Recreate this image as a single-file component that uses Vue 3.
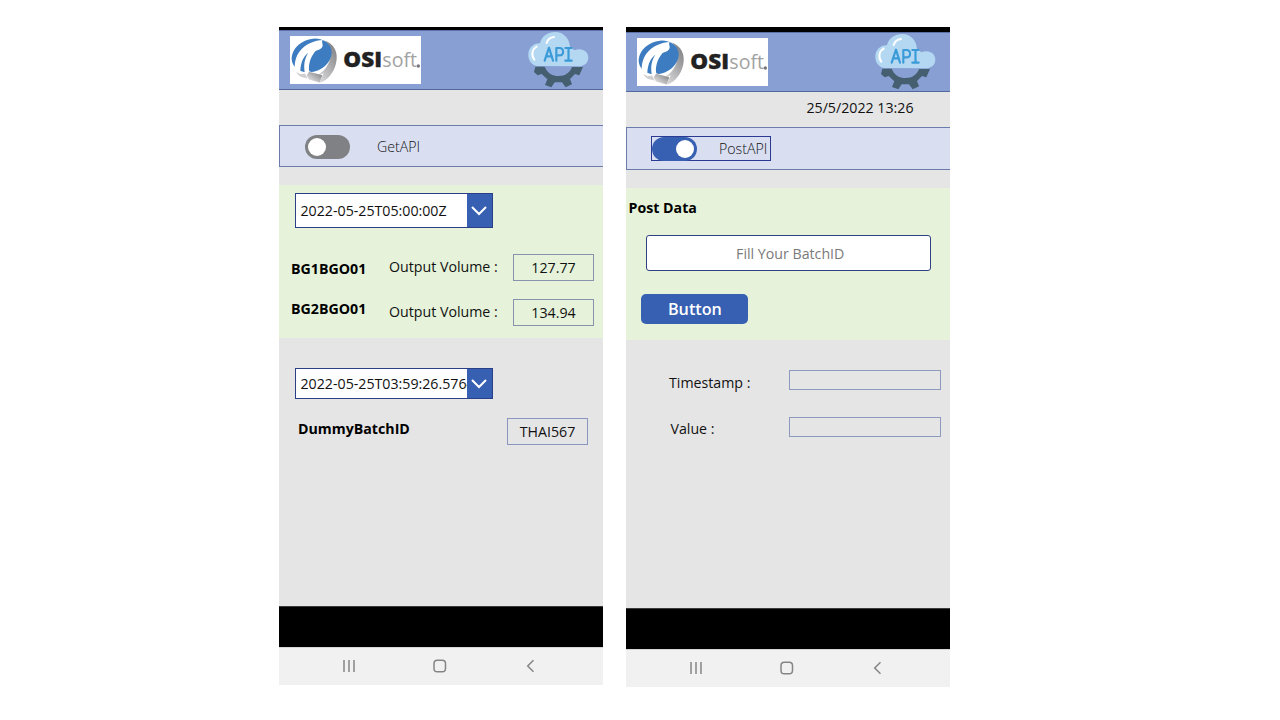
<script setup>
const phones = [
  { id: 'get', toggle: 'GetAPI', on: false, clock: '' },
  { id: 'post', toggle: 'PostAPI', on: true, clock: '25/5/2022 13:26' },
]
const volumes = [
  { tag: 'BG1BGO01', value: '127.77' },
  { tag: 'BG2BGO01', value: '134.94' },
]
const results = ['Timestamp :', 'Value :']
</script>

<template>
  <main class="stage">
    <section v-for="p in phones" :key="p.id" class="phone" :class="p.id">
      <header class="header">
        <svg class="logo" viewBox="45 45 393 147" preserveAspectRatio="none">
          <defs>
            <linearGradient id="silver" x1="0" y1="1" x2="1" y2="0">
              <stop offset="0" stop-color="#f2f2f2" />
              <stop offset=".45" stop-color="#bcbcbe" />
              <stop offset="1" stop-color="#77777b" />
            </linearGradient>
          </defs>
          <rect x="45" y="45" width="393" height="147" fill="#fff" />
          <path d="M146 58C179 68 191 97 183 128C177 155 158 179 135 186L101 176L106 158L132 160C149 153 165 126 168 101C169 80 159 66 146 58Z" fill="url(#silver)" />
          <ellipse cx="110" cy="104" rx="62" ry="49" transform="rotate(-24 110 104)" fill="#3d7cc0" />
          <path d="M50 132C55 158 74 158 89 156L103 152L134 163L146 158L134 186L101 176L84 170C66 170 50 156 50 132Z" fill="#fff" />
          <path d="M48 124C49 140 53 150 62 156C62 128 72 104 90 88C67 99 57 122 62 156L76 161C75 131 83 109 100 96C88 114 85 136 90 159L103 153C99 134 105 110 121 91C133 87 142 83 143 74C143 66 139 61 143 57C121 58 91 68 73 93C62 108 57 130 60 150C53 143 50 135 48 124Z" fill="#fff" />
          <path d="M64 153L76 161L90 159L98 174L82 170C73 168 68 161 64 153Z" fill="#cfcfd1" />
          <path d="M102 153L142 164L134 186L102 177L95 164Z" fill="url(#silver)" />
          <text class="osi" x="205" y="140" textLength="116" lengthAdjust="spacingAndGlyphs">OSI</text>
          <text class="soft" x="322" y="139" textLength="104" lengthAdjust="spacingAndGlyphs">soft</text>
          <circle cx="430" cy="136" r="5" fill="#777" />
        </svg>
        <svg class="api" viewBox="36 33 186 174">
          <path d="M61 140L57 156L68 166L80 162L97 178L90 195L109 202L119 187H141L152 202L171 193L165 177L180 162L193 166L204 141H171C165 158 151 168 131 168C111 168 96 158 89 140Z" fill="#455f70" />
          <path d="M69 138C51 136 40 122 40 104C40 84 55 69 75 70C80 48 98 36 121 36C145 36 163 55 165 80C172 84 176 89 178 91C200 81 220 94 220 112C220 130 207 138 194 139Z" fill="#b5d8f2" />
          <path d="M58 119C48 107 51 87 65 80M95 69C98 59 107 52 117 51" fill="none" stroke="#fff" stroke-width="6" stroke-linecap="round" />
          <g fill="none" stroke="#3a9bd8" stroke-width="6.5" stroke-linecap="round" stroke-linejoin="round">
            <path d="M89 122L102 83L114 122M93 109H111" />
            <path d="M124 122V84H133C148 84 148 106 133 106H125" />
            <path d="M151 84H170M160.5 84V122M151 122H170" />
          </g>
        </svg>
      </header>
      <div class="clock">{{ p.clock }}</div>
      <div class="bar">
        <div class="toggle" :class="{ on: p.on }">
          <span class="track"><span class="knob"></span></span>
          <span class="toggle-label">{{ p.toggle }}</span>
        </div>
      </div>

      <template v-if="p.id === 'get'">
        <div class="green">
          <div class="select">
            <span class="select-text">2022-05-25T05:00:00Z</span>
            <span class="arrow"><svg viewBox="0 0 25 33"><path d="M5 13L12 20L19 13" /></svg></span>
          </div>
          <div v-for="v in volumes" :key="v.tag" class="volume">
            <b>{{ v.tag }}</b>
            <span class="volume-label">Output Volume :</span>
            <span class="box">{{ v.value }}</span>
          </div>
        </div>
        <div class="lower">
          <div class="select short">
            <span class="select-text">2022-05-25T03:59:26.5764</span>
            <span class="arrow"><svg viewBox="0 0 25 29"><path d="M5 11L12 18L19 11" /></svg></span>
          </div>
          <div class="batch">
            <b>DummyBatchID</b>
            <span class="box">THAI567</span>
          </div>
        </div>
      </template>

      <template v-else>
        <div class="green">
          <b class="post-title">Post Data</b>
          <div class="input">Fill Your BatchID</div>
          <div class="button">Button</div>
        </div>
        <div class="lower">
          <div v-for="r in results" :key="r" class="result">
            <span>{{ r }}</span>
            <span class="empty"></span>
          </div>
        </div>
      </template>

      <div class="black"></div>
      <nav class="nav">
        <svg viewBox="0 0 324 38">
          <g fill="none" stroke="#858585" stroke-width="1.5">
            <path d="M65 13V25M70 13V25M75 13V25" />
            <rect x="155" y="13.2" width="11.5" height="11.5" rx="3.3" />
            <path d="M254.5 13.2L248.7 19L254.5 24.8" />
          </g>
        </svg>
      </nav>
    </section>
  </main>
</template>

<style>
body { background: #fff; }
</style>

<style scoped>
* { box-sizing: border-box; }
.stage {
  width: 1280px;
  height: 720px;
  display: flex;
  align-items: flex-start;
  gap: 23px;
  padding: 27px 0 0 279px;
  overflow: hidden;
  background: #fff;
  color: #111;
  font-family: "Open Sans", "Noto Sans", sans-serif;
  font-size: 14.2px;
  line-height: 20px;
  white-space: nowrap;
}
.phone {
  width: 324px;
  display: flex;
  flex-direction: column;
  background: #e5e5e5;
  border-top: 3px solid #000;
}
.post { border-top-width: 5px; }
.header {
  height: 60px;
  display: flex;
  justify-content: space-between;
  padding: 4.5px 14px 0 11px;
  background: #879fd3;
  border-top: 1px solid #5c72a8;
  border-bottom: 1px solid #53689b;
}
.logo { width: 131px; height: 48.5px; }
.api { width: 62px; height: 58px; margin-top: -4.5px; }
.get .api { margin-top: -5px; }
.osi { font: 800 62px "Open Sans", sans-serif; fill: #222; stroke: #222; stroke-width: 1px; }
.soft { font: 400 61px "Open Sans", sans-serif; fill: #a2a2a2; }
.clock { height: 35px; padding: 6px 36.5px 0 0; text-align: right; }
.bar {
  height: 43px;
  padding: 8px 0 0 25px;
  background: #d9dff1;
  border: solid #6b7bab;
  border-width: 1px 0 1px 1px;
}
.toggle { width: 120px; height: 26px; display: flex; align-items: center; }
.get .bar { height: 42px; }
.get .toggle { height: 25px; }
.toggle.on { width: 119.5px; height: 25px; border: 1.5px solid #2b3b93; margin-left: -1px; }
.track { width: 45px; height: 24px; padding: 3px 3.5px 3px 2.5px; border-radius: 12px; background: #808184; }
.on .track { background: #3860b2; display: flex; justify-content: flex-end; }
.knob { display: block; width: 18px; height: 18px; border-radius: 50%; background: #fff; }
.toggle-label { margin-left: 27px; font-weight: 300; color: #111; }
.on .toggle-label { margin-left: 22px; }
.green { height: 153px; margin-top: 17px; padding-top: 8px; background: #e6f3da; }
.get .green { margin-top: 18px; }
.post .green { height: 152px; margin-top: 18px; padding-top: 10px; }
.select {
  width: 198.5px;
  height: 35px;
  margin-left: 15.5px;
  display: flex;
  background: #fff;
  border: 1.5px solid #2b3e88;
}
.short { height: 31px; }
.select-text { flex: 1; min-width: 0; padding-left: 5px; line-height: 34px; overflow: hidden; }
.short .select-text { line-height: 30px; }
.arrow { width: 25px; background: #3860b2; }
.arrow svg { display: block; width: 25px; }
.arrow path { fill: none; stroke: #fff; stroke-width: 2; }
b { font-weight: 700; color: #000; }
.volume {
  display: grid;
  grid-template-columns: 98px 124px 81px;
  align-items: start;
  margin-top: 26px;
  padding-left: 12px;
}
.volume + .volume { margin-top: 18px; }
.volume b { padding-top: 5px; }
.volume + .volume b { padding-top: 0; }
.volume-label { padding-top: 3px; }
.box {
  width: 81px;
  height: 27px;
  border: 1px solid #8793ad;
  text-align: center;
  line-height: 26px;
}
.lower { height: 268px; padding-top: 30px; }
.batch { display: flex; justify-content: space-between; padding: 19px 15px 0 19px; }
.batch b { padding-top: 1px; }
.batch .box { border-color: #8b95bf; }
.post-title { display: block; padding-left: 2.5px; }
.input {
  width: 285.5px;
  height: 36.5px;
  margin: 16.5px 0 0 19.5px;
  padding-left: 4px;
  border: 1.5px solid #2f4180;
  border-radius: 3px;
  background: #fff;
  color: #7a7a7a;
  text-align: center;
  line-height: 35px;
}
.button {
  width: 107px;
  height: 30px;
  margin: 23px 0 0 15.4px;
  border-radius: 5px;
  background: #3860b2;
  color: #fff;
  font-size: 16.2px;
  font-weight: 600;
  text-align: center;
  line-height: 31px;
}
.result { display: flex; justify-content: space-between; height: 47px; padding: 0 9px 0 43px; }
.result:nth-child(2) { padding-left: 44.5px; }
.result span:first-child { padding-top: 3px; }
.result:nth-child(2) span:first-child { padding-top: 2px; }
.empty { width: 152.5px; height: 20px; border: 1px solid #8d99bd; }
.black { height: 41px; background: #000; border-top: 1px solid #3a3a3a; }
.nav { height: 38px; background: #f1f1f1; border-top: 1px solid #d5d5d5; }
.nav svg { display: block; width: 324px; height: 38px; margin-top: -1px; }
</style>
